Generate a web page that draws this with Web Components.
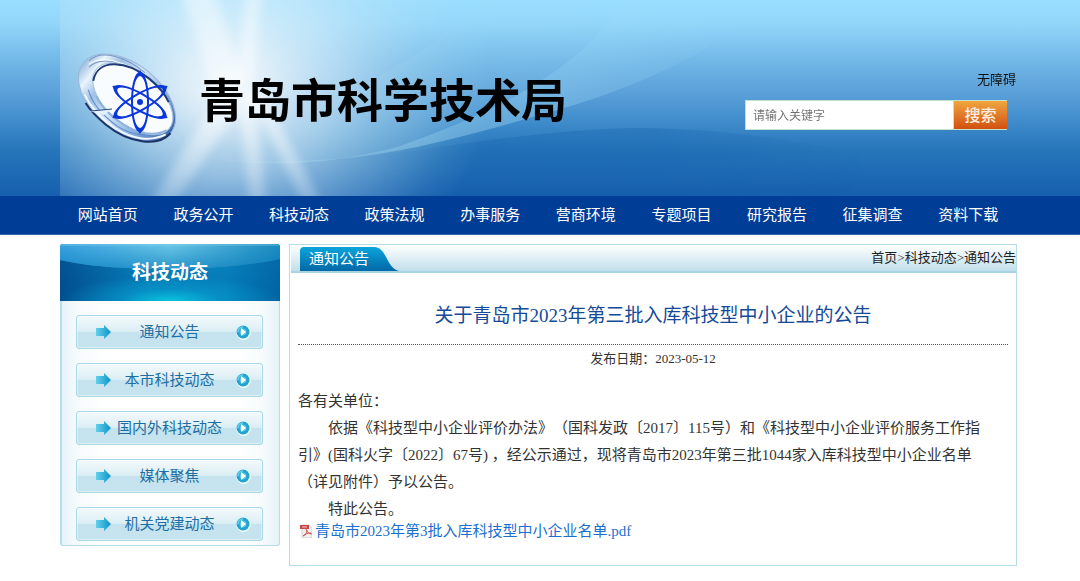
<!DOCTYPE html>
<html lang="zh-CN">
<head>
<meta charset="utf-8">
<title>青岛市科学技术局</title>
<style>
  body {
    margin: 0;
    background: #fff;
    color: #333;
    font-family: "Liberation Serif", "Noto Sans CJK SC", sans-serif;
    font-size: 15px;
    text-spacing-trim: space-all;
    --gutter-left: 60px;
    --gutter-right: 64px;
  }
</style>
</head>
<body>
<site-page></site-page>

<template id="site-page">
  <style>
    :host { display: block; }
    main {
      display: grid;
      grid-template-columns: 220px minmax(0, 1fr);
      column-gap: 9px;
      align-items: start;
      padding: 9px 63px 14px var(--gutter-left);
    }
  </style>
  <site-banner></site-banner>
  <site-nav></site-nav>
  <main>
    <side-menu heading="科技动态">
      <side-link>通知公告</side-link>
      <side-link>本市科技动态</side-link>
      <side-link>国内外科技动态</side-link>
      <side-link>媒体聚焦</side-link>
      <side-link>机关党建动态</side-link>
    </side-menu>
    <notice-panel></notice-panel>
  </main>
</template>

<template id="site-banner">
  <style>
    :host {
      display: block;
      position: relative;
      background: linear-gradient(#9adeff 0, #92d6fa 12%, #6db3e4 34%, #5a9fd8 48%, #438fce 60%, #2675b9 77%, #165fae 100%);
    }
    .art {
      position: absolute;
      top: 0;
      left: 60px;
      width: calc(100% - 60px);
      height: 100%;
    }
    .row {
      position: relative;
      display: flex;
      justify-content: space-between;
      align-items: flex-start;
      min-height: 196px;
      box-sizing: border-box;
      padding: 53px var(--gutter-right) 0 77px;
    }
    .tools {
      display: flex;
      flex-direction: column;
      align-items: flex-end;
      gap: 10px;
      padding-top: 17px;
    }
    a { color: #111; font-size: 13px; line-height: 20px; text-decoration: none; }
    search-box { margin-right: 9px; }
  </style>
  <svg class="art" viewBox="60 0 1020 196" preserveAspectRatio="xMinYMin slice" aria-hidden="true">
    <defs>
      <radialGradient id="halo" gradientUnits="userSpaceOnUse" cx="0" cy="0" r="1" gradientTransform="translate(228 84) scale(265 215)">
        <stop offset="0" stop-color="#fbfdfe" stop-opacity=".95"/>
        <stop offset=".18" stop-color="#eef7fc" stop-opacity=".85"/>
        <stop offset=".42" stop-color="#d6eefa" stop-opacity=".65"/>
        <stop offset=".68" stop-color="#bfe4f6" stop-opacity=".34"/>
        <stop offset=".88" stop-color="#b4e0f5" stop-opacity=".1"/>
        <stop offset="1" stop-color="#b0dff5" stop-opacity="0"/>
      </radialGradient>
      <linearGradient id="ray" gradientUnits="userSpaceOnUse" x1="230" y1="90" x2="230" y2="215">
        <stop offset="0" stop-color="#fff" stop-opacity=".6"/>
        <stop offset="1" stop-color="#fff" stop-opacity=".2"/>
      </linearGradient>
      <linearGradient id="sweep" gradientUnits="userSpaceOnUse" x1="250" y1="160" x2="740" y2="20">
        <stop offset="0" stop-color="#bfeaf6" stop-opacity=".1"/>
        <stop offset=".3" stop-color="#a5dcf2" stop-opacity=".42"/>
        <stop offset=".6" stop-color="#9fdaf4" stop-opacity=".36"/>
        <stop offset="1" stop-color="#9adeff" stop-opacity="0"/>
      </linearGradient>
      <linearGradient id="wave" gradientUnits="userSpaceOnUse" x1="300" y1="0" x2="860" y2="0">
        <stop offset="0" stop-color="#0f5cac" stop-opacity="0"/>
        <stop offset=".3" stop-color="#0f5cac" stop-opacity=".3"/>
        <stop offset=".65" stop-color="#0f5cac" stop-opacity=".28"/>
        <stop offset="1" stop-color="#0f5cac" stop-opacity="0"/>
      </linearGradient>
      <linearGradient id="fade" x1="0" y1="0" x2="0" y2="1">
        <stop offset="0" stop-color="#fff"/>
        <stop offset=".5" stop-color="#fff" stop-opacity=".7"/>
        <stop offset="1" stop-color="#fff" stop-opacity="0"/>
      </linearGradient>
      <mask id="lower"><rect x="60" y="125" width="1020" height="71" fill="url(#fade)"/></mask>
      <filter id="soft" x="-30%" y="-30%" width="160%" height="160%"><feGaussianBlur stdDeviation="5"/></filter>
    </defs>
    <path d="M250 163C360 162 430 147 490 140C540 134 590 128 640 128C740 129 800 142 880 158V196H250Z" fill="url(#wave)" mask="url(#lower)"/>
    <rect x="60" width="500" height="196" fill="url(#halo)"/>
    <path d="M210 158C280 170 350 160 400 146C500 110 580 70 625 0H760V10C700 62 610 96 550 112C480 132 400 156 320 160C280 162 240 162 210 158Z" fill="url(#sweep)"/>
    <path d="M210 158C280 170 340 162 400 146C500 110 580 70 625 0H480C430 60 300 120 210 158Z" fill="url(#sweep)" opacity=".35"/>
    <g fill="url(#ray)" filter="url(#soft)">
      <path d="M222 90L146 210H170L238 110Z"/>
      <path d="M238 90L250 215H268L254 90Z"/>
      <path d="M248 90L306 210H326L264 95Z"/>
      <path d="M215 95L180 -10H214L242 80Z" opacity=".7"/>
      <path d="M235 90L246 -10H262L255 80Z" opacity=".7"/>
    </g>
  </svg>
  <div class="row">
    <site-brand>青岛市科学技术局</site-brand>
    <div class="tools">
      <a href="#accessible">无障碍</a>
      <search-box></search-box>
    </div>
  </div>
</template>

<template id="site-brand">
  <style>
    :host { display: flex; align-items: center; gap: 20px; }
    svg { display: block; flex: none; }
    h1 {
      margin: 0;
      padding-bottom: 4px;
      color: #000;
      font: 700 46px/60px "Noto Sans CJK SC", sans-serif;
      white-space: nowrap;
    }
  </style>
  <svg width="102" height="92" viewBox="77 53 102 92" aria-hidden="true">
    <defs>
      <linearGradient id="rim" x1="0" y1="0" x2="1" y2="0">
        <stop offset="0" stop-color="#9dbde2"/>
        <stop offset=".12" stop-color="#eaf4fc"/>
        <stop offset=".25" stop-color="#9fc0e6"/>
        <stop offset=".45" stop-color="#d4e6f7"/>
        <stop offset=".75" stop-color="#86aede"/>
        <stop offset="1" stop-color="#3d66a8"/>
      </linearGradient>
    </defs>
    <g transform="rotate(39 127 98)">
      <ellipse cx="127" cy="98" rx="56" ry="34" fill="url(#rim)" stroke="#9db8da" stroke-width="1"/>
      <path d="M98 128C107 131 117 132 127 132C157 132 182 117 183 98" fill="none" stroke="#1c3365" stroke-width="2"/>
      <path d="M74 93C76 76 100 67 125 67M78 98C80 81 103 71 127 70" fill="none" stroke="#7797c4" stroke-width="1"/>
      <path d="M76 96C80 80 102 72 124 70" fill="none" stroke="#fff" stroke-width="1"/>
      <path d="M92 122C106 129 122 130 136 129C158 127 174 116 180 102" fill="none" stroke="#f2f8ff" stroke-width="2"/>
      <path d="M92 116C104 125 122 127 138 126C156 124 171 113 178 99" fill="none" stroke="#5c8acb" stroke-width="1"/>
      <ellipse cx="132" cy="95" rx="47" ry="26" fill="#f9fcff" stroke="#a8c4e4" stroke-width="1"/>
      <path d="M90 106C79 86 102 69 132 69C144 69 154 71 162 75" fill="none" stroke="#203c76" stroke-width="2"/>
      <path d="M102 116C114 122 134 123 150 119C166 115 175 106 178 98" fill="none" stroke="#8fb3dd" stroke-width="2"/>
    </g>
    <path d="M89 111L112 109L104 115Z" fill="#e4f0fc"/>
    <path d="M91 111L112 109" stroke="#284882" stroke-width="1"/>
    <g fill="none" stroke="#0b36dc" stroke-width="2">
      <ellipse cx="140" cy="102" rx="8" ry="29"/>
      <ellipse cx="140" cy="102" rx="8" ry="29" transform="rotate(60 140 102)"/>
      <ellipse cx="140" cy="102" rx="8" ry="29" transform="rotate(120 140 102)"/>
    </g>
    <g fill="#0b36dc">
      <circle cx="140" cy="102" r="3"/>
      <path id="tip" d="M140 70C142 73 145 77 146 84C144 80 142 76 140 76C138 76 136 80 134 84C135 77 138 73 140 70Z"/>
      <use href="#tip" transform="rotate(60 140 102)"/>
      <use href="#tip" transform="rotate(120 140 102)"/>
      <use href="#tip" transform="rotate(180 140 102)"/>
      <use href="#tip" transform="rotate(240 140 102)"/>
      <use href="#tip" transform="rotate(300 140 102)"/>
    </g>
  </svg>
  <h1><slot></slot></h1>
</template>

<template id="search-box">
  <style>
    :host { display: block; }
    form { display: flex; box-sizing: border-box; height: 30px; border: 1px solid #bfe3cf; border-right: 0; }
    input {
      width: 207px;
      box-sizing: border-box;
      border: 0;
      border-radius: 0;
      padding: 0 7px;
      background: #fff;
      color: #333;
      font: 12px/18px "Noto Sans CJK SC", sans-serif;
      outline: 0;
    }
    input::placeholder { color: #757575; opacity: 1; }
    button {
      width: 54px;
      border: 0;
      border-left: 1px solid #bfe3cf;
      padding: 0 0 2px;
      background: linear-gradient(#f0a640, #d25010);
      color: #fdeee0;
      font: 500 16px/24px "Noto Sans CJK SC", sans-serif;
    }
  </style>
  <form role="search">
    <input type="text" placeholder="请输入关键字" aria-label="请输入关键字">
    <button type="button">搜索</button>
  </form>
</template>

<template id="site-nav">
  <style>
    :host { display: block; background: #003d96; border-bottom: 1px solid #2f62ac; }
    nav {
      display: grid;
      grid-template-columns: repeat(10, minmax(0, 1fr));
      padding: 0 var(--gutter-right) 0 var(--gutter-left);
    }
    a { color: #fff; font-size: 15px; line-height: 38px; text-align: center; text-decoration: none; white-space: nowrap; }
  </style>
  <nav>
    <a href="#home">网站首页</a>
    <a href="#affairs">政务公开</a>
    <a href="#news">科技动态</a>
    <a href="#policy">政策法规</a>
    <a href="#service">办事服务</a>
    <a href="#business">营商环境</a>
    <a href="#topics">专题项目</a>
    <a href="#reports">研究报告</a>
    <a href="#survey">征集调查</a>
    <a href="#downloads">资料下载</a>
  </nav>
</template>

<template id="side-menu">
  <style>
    :host { display: block; }
    h2 {
      position: relative;
      margin: 0;
      height: 57px;
      border-radius: 3px 3px 0 0;
      overflow: hidden;
      background:
        radial-gradient(ellipse 50% 45% at 50% 100%, #09c3dc, rgba(9, 160, 208, .6) 45%, rgba(9, 160, 208, 0)),
        linear-gradient(90deg, rgba(0, 50, 115, .6), rgba(0, 90, 160, 0) 40%, rgba(0, 90, 160, 0) 75%, rgba(0, 80, 145, .5)),
        linear-gradient(#0a86c0, #0276b4);
      color: #fff;
      font-size: 19px;
      line-height: 57px;
      text-align: center;
    }
    svg { position: absolute; inset: 0; width: 100%; height: 100%; }
    span { position: relative; }
    div {
      display: grid;
      row-gap: 14px;
      padding: 14px 15px 4px;
      border: solid #b4dcea;
      border-width: 0 1px 1px 2px;
      border-radius: 0 0 3px 3px;
      background: linear-gradient(90deg, #e6f3fa, #f6fbfd 7%, #fff 20%, #fff 82%, #f6fbfd 92%, #e6f2f9);
    }
  </style>
  <h2>
    <svg viewBox="0 0 220 57" preserveAspectRatio="none" aria-hidden="true">
      <defs>
        <linearGradient id="gloss" x1="0" x2="1" y1="0" y2="0">
          <stop offset="0" stop-color="#3aa2e0"/>
          <stop offset=".5" stop-color="#6cc8e8"/>
          <stop offset="1" stop-color="#1b8bc0"/>
        </linearGradient>
        <linearGradient id="shade" x1="0" x2="0" y1="0" y2="1">
          <stop offset="0" stop-color="#0277b8" stop-opacity="0"/>
          <stop offset="1" stop-color="#0277b8" stop-opacity=".6"/>
        </linearGradient>
      </defs>
      <path d="M0 0H220V15C160 28 50 28 0 16Z" fill="url(#gloss)"/>
      <path d="M0 0H220V15C160 28 50 28 0 16Z" fill="url(#shade)"/>
      <path d="M0 1H220" stroke="#8fd3ee" stroke-width="1" opacity=".6"/>
    </svg>
    <span></span>
  </h2>
  <div><slot></slot></div>
</template>

<template id="side-link">
  <style>
    :host { display: block; }
    a {
      display: grid;
      grid-template-columns: 20px 1fr 20px;
      align-items: center;
      box-sizing: border-box;
      height: 34px;
      margin: 0 1px 0 -1px;
      padding: 0 6px 0 18px;
      border: 1px solid #a9d8e6;
      border-radius: 3px;
      box-shadow: inset 0 0 0 1px rgba(255, 255, 255, .4);
      background: linear-gradient(#f3f9fb, #dceff5 47%, #c4e3ee 52%, #c6e4ee);
      color: #1e6ea4;
      font-size: 15px;
      line-height: 22px;
      text-align: center;
      text-decoration: none;
      white-space: nowrap;
    }
    svg { display: block; }
    .text { display: flex; justify-content: center; margin-right: 12px; }
  </style>
  <a href="#list">
    <svg width="17" height="14" viewBox="0 0 17 14" aria-hidden="true">
      <defs><linearGradient id="g"><stop offset="0" stop-color="#62d0e8"/><stop offset="1" stop-color="#0f93cb"/></linearGradient></defs>
      <path d="M1 3H9V0L16 7L9 14V11H1Z" fill="url(#g)"/>
    </svg>
    <span class="text"><slot></slot></span>
    <svg width="15" height="15" viewBox="0 0 15 15" aria-hidden="true">
      <circle cx="7.500" cy="7.500" r="7.500" fill="#f2fafc"/>
      <circle cx="7" cy="7" r="6.500" fill="#1da4d0"/>
      <path d="M2 7A5 5 0 0 1 7 2" stroke="#5ccbe6" stroke-width="2" fill="none"/>
      <circle cx="7" cy="7" r="3.500" fill="#5cc4e0"/>
      <path d="M5 3L10 7L5 11Z" fill="#fff"/>
    </svg>
  </a>
</template>

<template id="notice-panel">
  <style>
    :host { display: block; box-sizing: border-box; border: 1px solid #b5dce9; background: #fff; }
    header {
      display: flex;
      justify-content: space-between;
      align-items: flex-start;
      height: 28px;
      box-sizing: border-box;
      margin-left: 1px;
      padding-left: 9px;
      border-bottom: 2px solid #a8d3e5;
      background: linear-gradient(#fff, #c0dfeb);
    }
    .tab { position: relative; width: 100px; height: 24px; margin: 2px 0 0; padding-left: 9px; box-sizing: border-box; color: #fff; font: 400 15px/22px "Noto Sans CJK SC", sans-serif; }
    .tab svg { position: absolute; inset: 0; }
    .tab span { position: relative; }
    .crumbs { font-size: 13px; line-height: 26px; color: #333; white-space: nowrap; }
    .crumbs a { color: #222; text-decoration: none; }
    article { padding: 29px 8px 26px; }
    h1 { margin: 0; padding-bottom: 15px; border-bottom: 1px dotted #555; color: #154a99; font-size: 19px; font-weight: 400; line-height: 27px; text-align: center; }
    .date { margin: 0; font-size: 13px; line-height: 28px; text-align: center; }
    .body { padding: 15px 14px 0 0; line-height: 27px; }
    .body p { margin: 0; }
    .body .indent { text-indent: 2em; }
    .file { display: flex; align-items: center; gap: 3px; width: max-content; margin-left: 2px; color: #1b6fd0; line-height: 16px; text-decoration: none; }
  </style>
  <header>
    <h2 class="tab">
      <svg width="100" height="24" viewBox="0 0 100 24" aria-hidden="true">
        <defs><linearGradient id="t" x1="0" x2="0" y1="0" y2="1"><stop offset="0" stop-color="#0aa5dc"/><stop offset="1" stop-color="#0268a6"/></linearGradient></defs>
        <path d="M0 24V4Q0 0 4 0H74C87 0 86 21 99 24Z" fill="url(#t)"/>
      </svg>
      <span>通知公告</span>
    </h2>
    <nav class="crumbs"><a href="#home">首页</a>&gt;<a href="#news">科技动态</a>&gt;<a href="#notice">通知公告</a></nav>
  </header>
  <article>
    <h1>关于青岛市2023年第三批入库科技型中小企业的公告</h1>
    <p class="date">发布日期：2023-05-12</p>
    <div class="body">
      <p>各有关单位：</p>
      <p class="indent">依据《科技型中小企业评价办法》（国科发政〔2017〕115号）和《科技型中小企业评价服务工作指引》(国科火字〔2022〕67号) ，经公示通过，现将青岛市2023年第三批1044家入库科技型中小企业名单（详见附件）予以公告。</p>
      <p class="indent">特此公告。</p>
      <a class="file" href="#pdf">
        <svg width="12" height="14" viewBox="0 0 12 14" aria-hidden="true">
          <path d="M2 1H9L12 4V14H2Z" fill="#efefef" stroke="#d4d4d4" stroke-width="1"/>
          <rect y="1" width="9" height="4" fill="#c4474b"/>
          <path d="M2 3H7" stroke="#f3c9ca" stroke-width="1"/>
          <path d="M6 5C7 8 9 10 12 10M7 6C7 9 5 12 3 12C4 10 8 9 11 9" fill="none" stroke="#cc5558" stroke-width="1"/>
        </svg>
        <span>青岛市2023年第3批入库科技型中小企业名单.pdf</span>
      </a>
    </div>
  </article>
</template>

<script>
  class TemplateElement extends HTMLElement {
    constructor() {
      super();
      const template = document.getElementById(this.localName);
      this.attachShadow({ mode: "open" }).append(template.content.cloneNode(true));
    }
  }

  class SideMenu extends TemplateElement {
    connectedCallback() {
      this.shadowRoot.querySelector("h2 span").textContent = this.getAttribute("heading");
    }
  }

  customElements.define("side-link", class extends TemplateElement {});
  customElements.define("side-menu", SideMenu);
  customElements.define("notice-panel", class extends TemplateElement {});
  customElements.define("search-box", class extends TemplateElement {});
  customElements.define("site-brand", class extends TemplateElement {});
  customElements.define("site-banner", class extends TemplateElement {});
  customElements.define("site-nav", class extends TemplateElement {});
  customElements.define("site-page", class extends TemplateElement {});
</script>
</body>
</html>
